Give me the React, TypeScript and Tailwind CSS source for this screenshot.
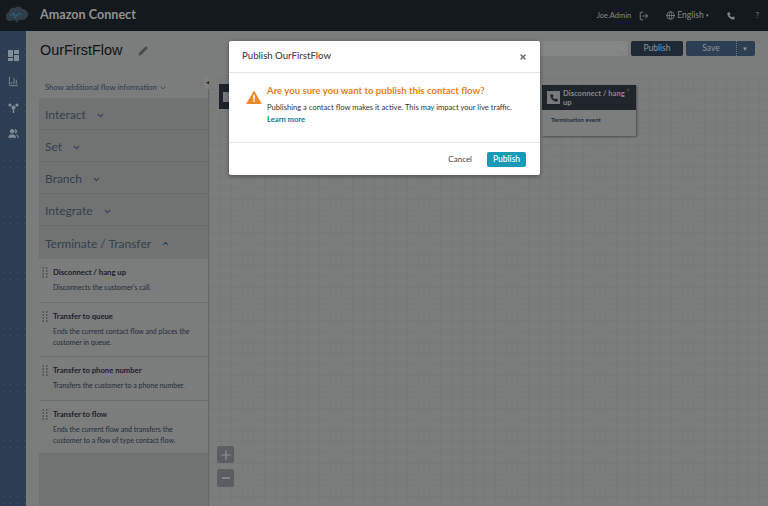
import { ChevronDown, ChevronUp, Pencil, Globe, Phone, LogOut, BarChart3, Users, X, Plus, Minus } from "lucide-react";

const sections = ["Interact", "Set", "Branch", "Integrate"];
const items = [
  { t: "Disconnect / hang up", d: ["Disconnects the customer's call."], h: "h-[44px]" },
  { t: "Transfer to queue", d: ["Ends the current contact flow and places the", "customer in queue."], h: "h-[54px]" },
  { t: "Transfer to phone number", d: ["Transfers the customer to a phone number."], h: "h-[44px]" },
  { t: "Transfer to flow", d: ["Ends the current flow and transfers the", "customer to a flow of type contact flow."], h: "h-[53px]" },
];

function Logo() {
  return (
    <svg width="24" height="22" viewBox="0 0 24 22" fill="none">
      <path d="M5 16c-3 0-4-2-4-5s1-3 3-4c0-3 3-5 6-4 2-2 6-2 7 1 3 0 6 2 6 5s-3 6-6 6h-3l-3 3-1-3z" fill="#2f3e48" />
      <path d="M5 11l3-3 3 3 3-3 3 2M8 8l2 5 4-5" stroke="#16a2bc" strokeWidth="0.8" strokeDasharray="1 1" />
    </svg>
  );
}

function Grip() {
  return (
    <svg width="6" height="11" viewBox="0 0 6 11" className="shrink-0 text-[#55585b]" fill="currentColor">
      {[0, 3, 6, 9].map((y) => (
        <g key={y}>
          <rect x="0.5" y={y} width="1.5" height="2" />
          <rect x="4" y={y} width="1.5" height="2" />
        </g>
      ))}
    </svg>
  );
}

export default function App() {
  return (
    <div className="relative w-[768px] h-[506px] overflow-hidden bg-[#7b7c7c] font-['Lato',sans-serif] flex flex-col">
      <header className="h-[31px] shrink-0 bg-[#14191e] flex items-center text-[#85878a]">
        <div className="w-[40px] pl-[5px] flex items-center"><Logo /></div>
        <span className="text-[12.6px] font-bold text-[#8f9192]">Amazon Connect</span>
        <div className="ml-auto flex items-center text-[7.5px]">
          <span>Joe.Admin</span>
          <LogOut className="w-[10px] h-[10px] ml-[8px]" />
          <Globe className="w-[9px] h-[9px] ml-[17px]" />
          <span className="ml-[2px] text-[8.5px]">English</span>
          <span className="ml-[2px] text-[5px]">▾</span>
          <Phone className="w-[8px] h-[8px] ml-[18px]" fill="currentColor" />
          <span className="ml-[21px] mr-[9px]">?</span>
        </div>
      </header>

      <div className="flex-1 flex min-h-0">
        <nav className="w-[26px] shrink-0 bg-[#2c3f52] bg-[radial-gradient(#3f5165_0.6px,transparent_0.7px)] bg-[length:7px_7px] flex flex-col items-center pt-[19px] gap-[15px] text-[#7f8c99]">
          <svg width="11" height="11" viewBox="0 0 11 11" fill="currentColor"><rect x="0" y="0" width="5" height="7" /><rect x="6" y="0" width="5" height="4" /><rect x="0" y="8" width="5" height="3" /><rect x="6" y="5" width="5" height="6" /></svg>
          <BarChart3 className="w-[11px] h-[11px]" />
          <svg width="11" height="11" viewBox="0 0 11 11" fill="currentColor"><circle cx="2" cy="3" r="1.6" /><circle cx="9" cy="3" r="1.6" /><circle cx="5.5" cy="5.5" r="2" /><rect x="4.8" y="6" width="1.4" height="5" /></svg>
          <Users className="w-[11px] h-[11px]" fill="currentColor" />
        </nav>

        <main className="flex-1 min-w-0 flex flex-col">
          <div className="h-[47px] shrink-0 flex items-center pl-[14px] pr-[13px] pb-[7px]">
            <span className="font-['Liberation_Sans',sans-serif] text-[14.4px] text-[#101214]">OurFirstFlow</span>
            <Pencil className="w-[10px] h-[10px] ml-[16px] text-[#4a4c4e]" fill="currentColor" />
            <div className="ml-auto flex items-center gap-[3px] h-[15px] mb-[6px]">
              <div className="w-[100px] h-[15px] bg-[#848585] rounded-[1px] flex items-center justify-end pr-[3px]">
                <ChevronDown className="w-[7px] h-[7px] text-[#9c9d9d]" />
              </div>
              <div className="w-[52px] h-[15px] bg-[#34434f] bg-[radial-gradient(#1c2731_0.7px,transparent_0.8px)] bg-[length:2px_2px] rounded-[2px] flex items-center justify-center text-[8.5px] text-[#8f959c]">Publish</div>
              <div className="w-[69px] h-[15px] bg-[#2c3f52] rounded-[2px] flex items-center text-[8.5px] text-[#8f959c]">
                <span className="w-[51px] text-center border-r border-dotted border-[#6f7a85] leading-[15px]">Save</span>
                <span className="ml-[5px] text-[6px]">▼</span>
              </div>
            </div>
          </div>

          <div className="flex-1 flex min-h-0 pl-[13px]">
            <aside className="relative w-[170px] shrink-0 bg-[#707372] flex flex-col border-r border-[#656768]">
              <div className="h-[20px] shrink-0 bg-[#7b7c7c] flex items-center pl-[6px] text-[7.7px] text-[#2b3a4a]">
                Show additional flow information
                <ChevronDown className="w-[8px] h-[8px] ml-[2px]" />
              </div>
              {sections.map((s) => (
                <div key={s} className="h-[32px] shrink-0 border-b border-[#6a6c6c] flex items-center pl-[6px] pt-[3px] text-[12px] text-[#34414f]">
                  {s}
                  <ChevronDown className="w-[9px] h-[9px] ml-[10px]" strokeWidth={3} />
                </div>
              ))}
              <div className="h-[33px] shrink-0 flex items-center pl-[6px] pt-[2px] text-[12px] text-[#34414f]">
                Terminate / Transfer
                <ChevronUp className="w-[9px] h-[9px] ml-[10px]" strokeWidth={3} />
              </div>
              {items.map((it) => (
                <div key={it.t} className={`${it.h} shrink-0 bg-[#7b7c7c] border-b border-[#6c6e6e] flex pt-[8px] pl-[3px]`}>
                  <Grip />
                  <div className="ml-[5px]">
                    <div className="text-[7.7px] font-bold text-[#1b2128] leading-[11px]">{it.t}</div>
                    <div className="mt-[4px] text-[7px] text-[#232d38] leading-[10.5px] whitespace-nowrap">
                      {it.d.map((l) => <div key={l}>{l}</div>)}
                    </div>
                  </div>
                </div>
              ))}
              <button className="absolute right-[-4px] top-[-1px] w-[8px] h-[12px] bg-[#7f8080] flex items-center justify-center text-[5px] text-[#1f2328]">◀</button>
            </aside>

            <section className="relative flex-1 bg-[#7b7c7c] bg-[linear-gradient(#777878_1px,transparent_1px),linear-gradient(90deg,#777878_1px,transparent_1px)] bg-[length:11px_11px]">
              <div className="absolute left-[10px] top-[6px] w-[30px] h-[25px] bg-[#1d2329] flex items-center pl-[4px]">
                <div className="w-[7px] h-[10px] bg-[#77797a]" />
              </div>
              <div className="absolute left-[333px] top-[7px] w-[94px] h-[51px] bg-[#7c7d7d] shadow-[1px_1px_2px_rgba(0,0,0,0.4)]">
                <div className="relative h-[25px] bg-[#20252b] flex items-center pl-[5px] pr-[8px] text-[7.6px] font-bold leading-[9px] text-[#85888b]">
                  <div className="w-[13px] h-[13px] bg-[#77797a] shrink-0 flex items-center justify-center mr-[3px]">
                    <Phone className="w-[8px] h-[8px] text-[#1d2329]" fill="currentColor" />
                  </div>
                  <span>Disconnect / hang up</span>
                  <X className="absolute right-[6px] top-[3px] w-[4px] h-[4px]" />
                </div>
                <div className="text-[6.2px] font-bold text-[#25303c] pl-[9px] pt-[5px]">Termination event</div>
              </div>
              <div className="absolute left-[8px] bottom-[43px] w-[17px] h-[17px] bg-[#5c5e5f] rounded-[2px] flex items-center justify-center">
                <Plus className="w-[14px] h-[14px] text-[#8f9191]" />
              </div>
              <div className="absolute left-[8px] bottom-[19px] w-[17px] h-[18px] bg-[#5c5e5f] rounded-[2px] flex items-center justify-center">
                <Minus className="w-[12px] h-[12px] text-[#8f9191]" strokeWidth={3} />
              </div>
            </section>
          </div>
        </main>
      </div>

      <div className="absolute left-[229px] top-[41px] w-[311px] h-[134px] bg-white rounded-[2px] shadow-[0_1px_4px_rgba(0,0,0,0.4)] flex flex-col">
        <div className="h-[32px] shrink-0 border-b border-[#e4e4e4] flex items-center px-[13px] text-[9.6px] font-medium text-[#444]">
          Publish OurFirstFlow
          <X className="ml-auto w-[8px] h-[8px] text-[#666]" strokeWidth={4} />
        </div>
        <div className="flex-1 border-b border-[#e4e4e4] flex pl-[17px] pt-[11px]">
          <svg width="16" height="14" viewBox="0 0 16 14" className="mt-[6px] shrink-0">
            <path d="M8 0.5 15.8 14H0.2z" fill="#ec8b26" />
            <rect x="7.2" y="5" width="1.6" height="4.5" fill="#fff" />
            <rect x="7.2" y="10.3" width="1.6" height="1.6" fill="#fff" />
          </svg>
          <div className="ml-[5px]">
            <div className="text-[9.6px] font-bold leading-[14px] text-[#e8811a]">Are you sure you want to publish this contact flow?</div>
            <div className="mt-[4px] text-[7.6px] leading-[11px] text-[#333]">Publishing a contact flow makes it active. This may impact your live traffic.</div>
            <div className="text-[7.6px] leading-[12px] font-bold text-[#0b7a93]">Learn more</div>
          </div>
        </div>
        <div className="h-[32px] shrink-0 flex items-center justify-end pr-[14px]">
          <span className="text-[8px] text-[#444] mr-[15px]">Cancel</span>
          <div className="w-[39px] h-[15px] bg-[#1a98b5] rounded-[2px] flex items-center justify-center text-[8.5px] font-medium text-white">Publish</div>
        </div>
      </div>
    </div>
  );
}
